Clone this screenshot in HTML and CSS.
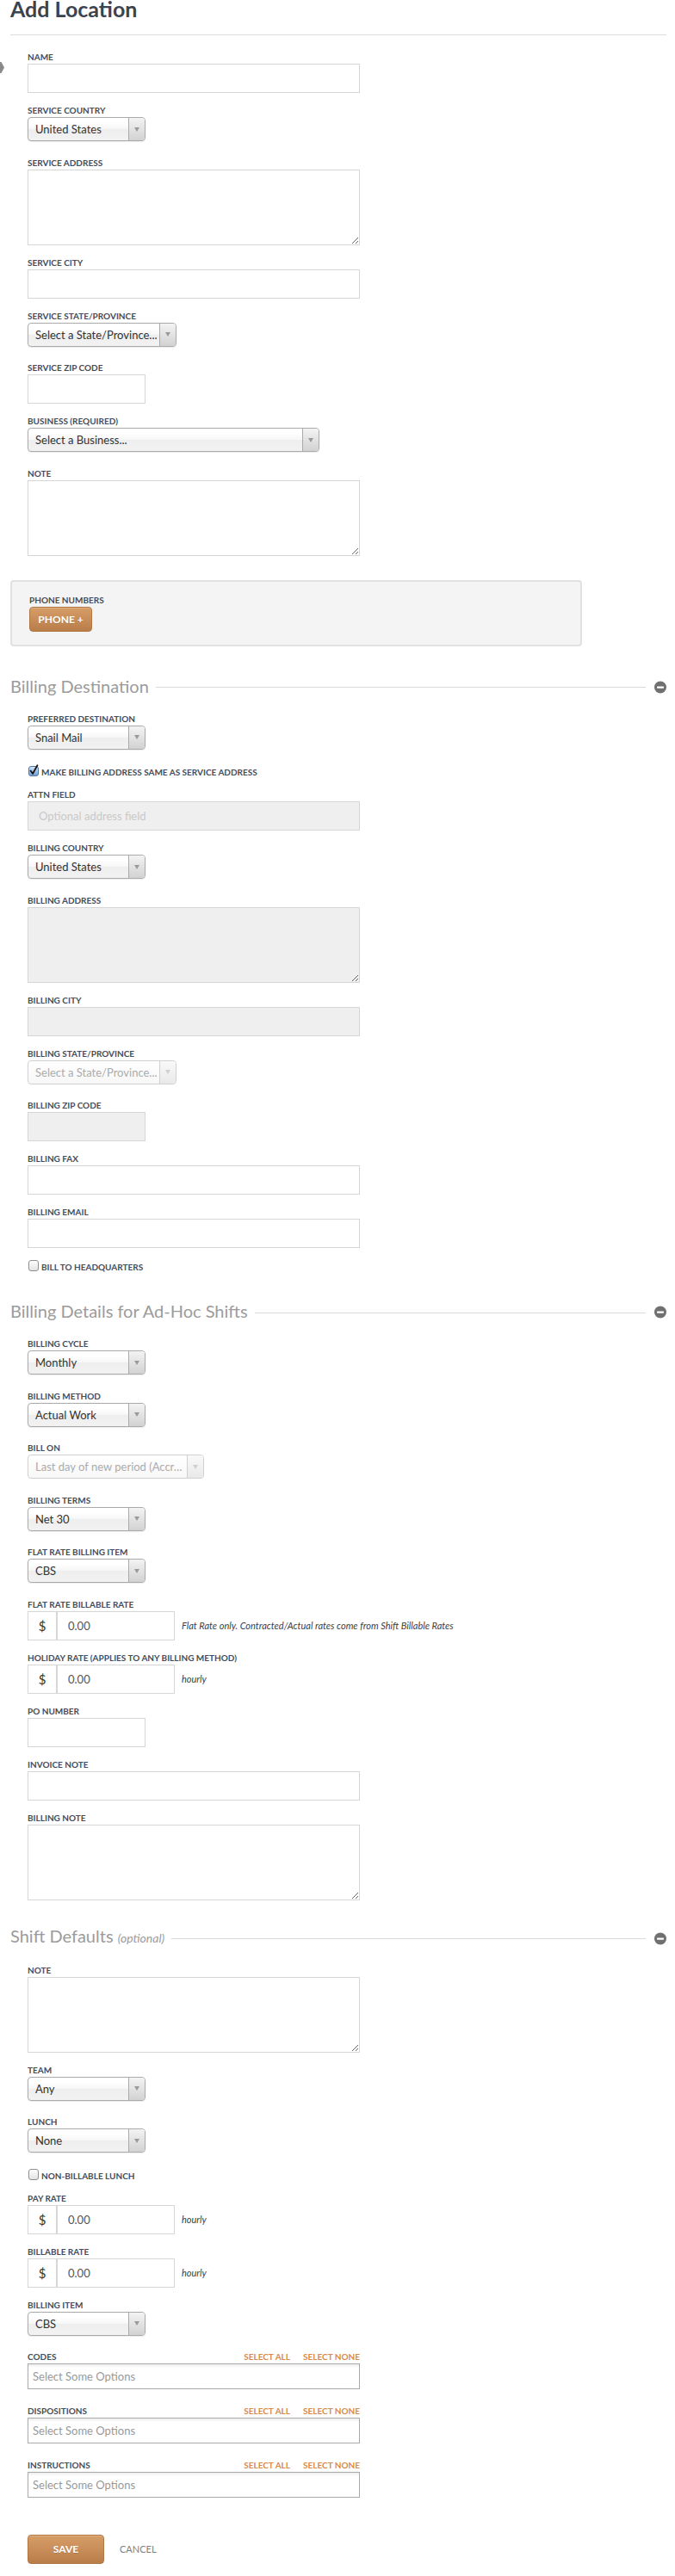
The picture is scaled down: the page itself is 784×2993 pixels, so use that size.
FILE: index.html
```html
<!DOCTYPE html>
<html lang="en">
<head>
<meta charset="utf-8">
<title>Add Location</title>
<link rel="stylesheet" href="styles.css">
</head>
<body>
<div class="page">
  <svg class="edge-tab" width="5" height="13" viewBox="0 0 5 13"><polygon points="0,0 1.5,0 5,6.5 1.5,13 0,13" fill="#8a8a8a"/></svg>
  <h1 class="title">Add Location</h1>
  <hr class="title-rule">

  <div class="fields first">
    <div class="field"><label class="lbl">Name</label><input class="input" type="text"></div>
    <div class="field sel"><label class="lbl">Service Country</label>
      <div class="select w137"><span class="select-text">United States</span><span class="select-arrow"></span></div></div>
    <div class="field"><label class="lbl">Service Address</label><textarea class="textarea"></textarea></div>
    <div class="field"><label class="lbl">Service City</label><input class="input" type="text"></div>
    <div class="field sel"><label class="lbl">Service State/Province</label>
      <div class="select w173"><span class="select-text">Select a State/Province...</span><span class="select-arrow"></span></div></div>
    <div class="field"><label class="lbl">Service Zip Code</label><input class="input short" type="text"></div>
    <div class="field sel"><label class="lbl">Business (Required)</label>
      <div class="select w339"><span class="select-text">Select a Business...</span><span class="select-arrow"></span></div></div>
    <div class="field"><label class="lbl">Note</label><textarea class="textarea"></textarea></div>
  </div>

  <div class="phone-box">
    <label class="lbl">Phone Numbers</label>
    <button class="btn btn-phone" type="button">Phone +</button>
  </div>

  <div class="sec-head">
    <h2 class="sec-title">Billing Destination</h2>
    <span class="sec-rule"></span>
    <svg class="collapse" width="14" height="15" viewBox="0 0 14 15"><circle cx="7" cy="7.5" r="7" fill="#707070"/><rect x="3" y="6.5" width="8" height="2.2" rx="0.6" fill="#fff"/></svg>
  </div>

  <div class="fields">
    <div class="field sel"><label class="lbl">Preferred Destination</label>
      <div class="select w137"><span class="select-text">Snail Mail</span><span class="select-arrow"></span></div></div>
    <div class="check-row">
      <svg class="cb" width="12" height="14" viewBox="0 0 12 14"><defs><linearGradient id="cbb" x1="0" y1="0" x2="0" y2="1"><stop offset="0" stop-color="#d6e7f9"/><stop offset="1" stop-color="#6a9dd6"/></linearGradient></defs><rect x="0.5" y="2.5" width="11" height="11" rx="2.5" fill="url(#cbb)" stroke="#56779f"/><path d="M2.6 7.6 L5 11 L10.4 1.2" fill="none" stroke="#161616" stroke-width="1.8" stroke-linecap="round" stroke-linejoin="round"/></svg>
      <span class="lbl inline">Make billing address same as service address</span>
    </div>
    <div class="field"><label class="lbl">Attn Field</label><input class="input dis" type="text" placeholder="Optional address field" disabled></div>
    <div class="field sel"><label class="lbl">Billing Country</label>
      <div class="select w137"><span class="select-text">United States</span><span class="select-arrow"></span></div></div>
    <div class="field"><label class="lbl">Billing Address</label><textarea class="textarea dis" disabled></textarea></div>
    <div class="field"><label class="lbl">Billing City</label><input class="input dis" type="text" disabled></div>
    <div class="field sel"><label class="lbl">Billing State/Province</label>
      <div class="select w173 disabled"><span class="select-text">Select a State/Province...</span><span class="select-arrow"></span></div></div>
    <div class="field"><label class="lbl">Billing Zip Code</label><input class="input short dis" type="text" disabled></div>
    <div class="field"><label class="lbl">Billing Fax</label><input class="input" type="text"></div>
    <div class="field"><label class="lbl">Billing Email</label><input class="input" type="text"></div>
    <div class="check-row">
      <svg class="cb" width="12" height="13" viewBox="0 0 12 13"><defs><linearGradient id="cbu1" x1="0" y1="0" x2="0" y2="1"><stop offset="0" stop-color="#ffffff"/><stop offset="1" stop-color="#e2e2e2"/></linearGradient></defs><rect x="0.5" y="0.5" width="11" height="12" rx="2.5" fill="url(#cbu1)" stroke="#8f8f8f"/></svg>
      <span class="lbl inline">Bill to Headquarters</span>
    </div>
  </div>

  <div class="sec-head">
    <h2 class="sec-title">Billing Details for Ad-Hoc Shifts</h2>
    <span class="sec-rule"></span>
    <svg class="collapse" width="14" height="15" viewBox="0 0 14 15"><circle cx="7" cy="7.5" r="7" fill="#707070"/><rect x="3" y="6.5" width="8" height="2.2" rx="0.6" fill="#fff"/></svg>
  </div>

  <div class="fields">
    <div class="field sel"><label class="lbl">Billing Cycle</label>
      <div class="select w137"><span class="select-text">Monthly</span><span class="select-arrow"></span></div></div>
    <div class="field sel"><label class="lbl">Billing Method</label>
      <div class="select w137"><span class="select-text">Actual Work</span><span class="select-arrow"></span></div></div>
    <div class="field sel"><label class="lbl">Bill On</label>
      <div class="select w205 disabled"><span class="select-text">Last day of new period (Accr…</span><span class="select-arrow"></span></div></div>
    <div class="field sel"><label class="lbl">Billing Terms</label>
      <div class="select w137"><span class="select-text">Net 30</span><span class="select-arrow"></span></div></div>
    <div class="field sel"><label class="lbl">Flat Rate Billing Item</label>
      <div class="select w137"><span class="select-text">CBS</span><span class="select-arrow"></span></div></div>
    <div class="field"><label class="lbl">Flat Rate Billable Rate</label>
      <div class="rate-row"><span class="addon">$</span><input class="rate-input" type="text" value="0.00"><span class="hint">Flat Rate only. Contracted/Actual rates come from Shift Billable Rates</span></div></div>
    <div class="field"><label class="lbl">Holiday Rate (Applies to any billing method)</label>
      <div class="rate-row"><span class="addon">$</span><input class="rate-input" type="text" value="0.00"><span class="hint">hourly</span></div></div>
    <div class="field"><label class="lbl">PO Number</label><input class="input short" type="text"></div>
    <div class="field"><label class="lbl">Invoice Note</label><input class="input" type="text"></div>
    <div class="field"><label class="lbl">Billing Note</label><textarea class="textarea"></textarea></div>
  </div>

  <div class="sec-head after-area">
    <h2 class="sec-title">Shift Defaults <em>(optional)</em></h2>
    <span class="sec-rule"></span>
    <svg class="collapse" width="14" height="15" viewBox="0 0 14 15"><circle cx="7" cy="7.5" r="7" fill="#707070"/><rect x="3" y="6.5" width="8" height="2.2" rx="0.6" fill="#fff"/></svg>
  </div>

  <div class="fields">
    <div class="field"><label class="lbl">Note</label><textarea class="textarea"></textarea></div>
    <div class="field sel"><label class="lbl">Team</label>
      <div class="select w137"><span class="select-text">Any</span><span class="select-arrow"></span></div></div>
    <div class="field sel"><label class="lbl">Lunch</label>
      <div class="select w137"><span class="select-text">None</span><span class="select-arrow"></span></div></div>
    <div class="check-row">
      <svg class="cb" width="12" height="13" viewBox="0 0 12 13"><defs><linearGradient id="cbu2" x1="0" y1="0" x2="0" y2="1"><stop offset="0" stop-color="#ffffff"/><stop offset="1" stop-color="#e2e2e2"/></linearGradient></defs><rect x="0.5" y="0.5" width="11" height="12" rx="2.5" fill="url(#cbu2)" stroke="#8f8f8f"/></svg>
      <span class="lbl inline">Non-billable lunch</span>
    </div>
    <div class="field"><label class="lbl">Pay Rate</label>
      <div class="rate-row"><span class="addon">$</span><input class="rate-input" type="text" value="0.00"><span class="hint">hourly</span></div></div>
    <div class="field"><label class="lbl">Billable Rate</label>
      <div class="rate-row"><span class="addon">$</span><input class="rate-input" type="text" value="0.00"><span class="hint">hourly</span></div></div>
    <div class="field sel"><label class="lbl">Billing Item</label>
      <div class="select w137"><span class="select-text">CBS</span><span class="select-arrow"></span></div></div>
    <div class="field multi-field">
      <div class="multi-head"><label class="lbl">Codes</label><span class="links"><span class="link">Select All</span><span class="link">Select None</span></span></div>
      <div class="multi">Select Some Options</div></div>
    <div class="field multi-field">
      <div class="multi-head"><label class="lbl">Dispositions</label><span class="links"><span class="link">Select All</span><span class="link">Select None</span></span></div>
      <div class="multi">Select Some Options</div></div>
    <div class="field multi-field">
      <div class="multi-head"><label class="lbl">Instructions</label><span class="links"><span class="link">Select All</span><span class="link">Select None</span></span></div>
      <div class="multi">Select Some Options</div></div>

    <div class="actions">
      <button class="btn btn-save" type="button">Save</button>
      <span class="cancel">Cancel</span>
    </div>
  </div>
</div>
</body>
</html>
```
FILE: styles.css
```css
* { box-sizing: border-box; }

body {
  margin: 0;
  background: #fff;
  font-family: Lato, "Open Sans", "Liberation Sans", sans-serif;
  color: #333;
}

.page {
  position: relative;
  padding: 0 10px 16px 12px;
}

.edge-tab {
  position: absolute;
  left: 0;
  top: 72px;
}

.title {
  margin: 0;
  font-size: 25px;
  line-height: 20px;
  font-weight: 700;
  color: #3c4350;
}

.title-rule {
  margin: 20px 0 0;
  border: 0;
  border-top: 1px solid #dcdcdc;
  height: 0;
}

.fields { padding-left: 20px; }
.fields.first { margin-top: 19px; }

.field { margin-bottom: 14px; }
.field.sel { margin-bottom: 18.5px; }
.field.multi-field { margin-bottom: 19px; }

.lbl {
  display: block;
  margin-bottom: 2px;
  font-size: 10px;
  line-height: 12px;
  font-weight: 700;
  text-transform: uppercase;
  color: #454c5b;
}

.lbl.inline {
  margin: 0;
  line-height: 10px;
}

.input {
  display: block;
  width: 386px;
  height: 34px;
  margin: 0;
  padding: 0 12px;
  border: 1px solid #d6d6d6;
  border-radius: 0;
  background: #fff;
  font-family: inherit;
  font-size: 13px;
  color: #555;
  outline: none;
}
.input.short { width: 137px; }
.input.dis { background: #efefef; }
.input::placeholder { color: #c9c9c9; }

.textarea {
  display: block;
  width: 386px;
  height: 88px;
  margin: 0;
  padding: 6px 10px;
  border: 1px solid #d6d6d6;
  border-radius: 0;
  background: #fff;
  font-family: inherit;
  font-size: 13px;
  outline: none;
}
.textarea.dis { background: #efefef; }

/* custom select */
.select {
  display: flex;
  height: 28px;
  border: 1px solid #aaa;
  border-radius: 4px;
  background: linear-gradient(#fff 20%, #f6f6f6 50%, #eee 52%, #f2f2f2 100%);
  box-shadow: 0 1px 1px rgba(0, 0, 0, 0.08);
  overflow: hidden;
}
.w137 { width: 137px; }
.w173 { width: 173px; }
.w205 { width: 205px; }
.w339 { width: 339px; }

.select-text {
  flex: 1;
  min-width: 0;
  padding-left: 8px;
  font-size: 13px;
  line-height: 26px;
  color: #333;
  white-space: nowrap;
  overflow: hidden;
}

.select-arrow {
  width: 19px;
  flex: none;
  display: flex;
  align-items: center;
  justify-content: center;
  border-left: 1px solid #aaa;
  background: linear-gradient(#f3f3f3, #d2d2d2);
}
.select-arrow::after {
  content: "";
  border-left: 3px solid transparent;
  border-right: 3px solid transparent;
  border-top: 5px solid #9a9a9a;
}

.select.disabled {
  border-color: #d0d0d0;
  background: linear-gradient(#fff, #f7f7f7);
  box-shadow: none;
}
.select.disabled .select-text { color: #ababab; }
.select.disabled .select-arrow {
  border-left-color: #d0d0d0;
  background: linear-gradient(#f9f9f9, #e9e9e9);
}
.select.disabled .select-arrow::after { border-top-color: #cfcfcf; }

/* checkbox rows */
.check-row {
  display: flex;
  align-items: flex-end;
  gap: 3px;
  height: 13px;
  margin-bottom: 15px;
  padding-left: 1px;
}
.cb { flex: none; display: block; }

/* rate inputs */
.rate-row {
  display: flex;
  align-items: center;
}
.addon {
  width: 34px;
  height: 34px;
  display: flex;
  align-items: center;
  justify-content: center;
  border: 1px solid #d6d6d6;
  font-size: 15px;
  color: #333;
  background: #fff;
}
.rate-input {
  width: 137px;
  height: 34px;
  margin: 0;
  padding: 0 12px;
  border: 1px solid #d6d6d6;
  border-radius: 0;
  font-family: inherit;
  font-size: 13px;
  color: #555;
  outline: none;
}
.hint {
  margin-left: 8px;
  font-size: 11px;
  line-height: 12px;
  font-style: italic;
  color: #3a3f48;
  white-space: nowrap;
}

/* phone box */
.phone-box {
  width: 664px;
  margin-top: 28px;
  padding: 15px 20px;
  border: 2px solid #e1e1e1;
  border-radius: 4px;
  background: #f4f4f4;
}

.btn {
  display: flex;
  align-items: center;
  justify-content: center;
  margin: 0;
  padding: 0;
  border: 1px solid #b07744;
  border-radius: 4px;
  background: linear-gradient(#d79d67, #b97d4a);
  color: #fff;
  font-family: inherit;
  font-size: 12px;
  font-weight: 700;
  text-transform: uppercase;
  text-shadow: 0 1px 0 rgba(0, 0, 0, 0.12);
  box-shadow: inset 0 1px 0 rgba(255, 255, 255, 0.2);
}
.btn-phone { width: 73px; height: 29px; }
.btn-save { width: 89px; height: 34px; }

/* section headings */
.sec-head {
  display: flex;
  align-items: center;
  height: 24px;
  margin: 34px 0 20px;
}
.sec-head.after-area { margin-top: 31px; }

.sec-title {
  margin: 0;
  font-size: 20px;
  line-height: 24px;
  font-weight: 400;
  color: #9b9b9b;
  white-space: nowrap;
}
.sec-title em {
  font-size: 14px;
  font-style: italic;
}

.sec-rule {
  flex: 1;
  height: 1px;
  margin: 4px 10px 0 8px;
  background: #dadada;
}

.collapse {
  flex: none;
  display: block;
  margin-top: 3px;
}

/* multi-selects */
.multi-head {
  display: flex;
  justify-content: space-between;
  width: 386px;
  margin-bottom: 2px;
}
.multi-head .lbl { margin: 0; }
.links {
  display: flex;
  gap: 15px;
}
.link {
  font-size: 10px;
  line-height: 12px;
  font-weight: 700;
  text-transform: uppercase;
  color: #d98a4b;
}
.multi {
  width: 386px;
  height: 30px;
  padding-left: 5px;
  border: 1px solid #aaa;
  background: linear-gradient(#eee 1%, #fff 15%);
  font-size: 13px;
  line-height: 28px;
  color: #999;
}

/* actions */
.actions {
  display: flex;
  align-items: center;
  gap: 18px;
  margin-top: 42.5px;
}
.cancel {
  font-size: 11px;
  text-transform: uppercase;
  color: #7b7f87;
}
```
